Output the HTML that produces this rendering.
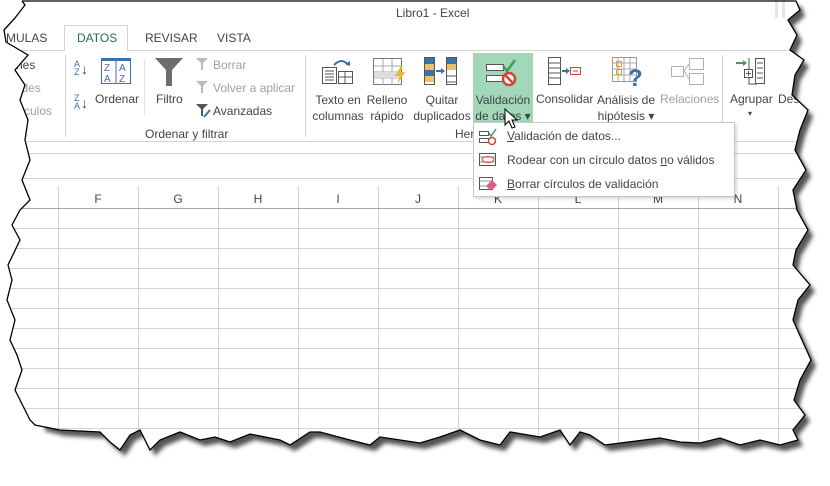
<!DOCTYPE html>
<html><head><meta charset="utf-8"><style>
*{margin:0;padding:0;box-sizing:border-box}
body{width:830px;height:485px;background:#fff;position:relative;overflow:hidden;font-family:"Liberation Sans",sans-serif;color:#444}
#page{position:absolute;left:0;top:0;width:830px;height:485px;background:#fff;
clip-path:polygon(22px 0,796px 0,800px 10px,788px 20px,797px 35px,790px 50px,804px 60px,795px 75px,792px 95px,808px 110px,800px 130px,795px 150px,806px 170px,793px 190px,797px 210px,808px 230px,796px 250px,793px 265px,810px 285px,798px 300px,793px 320px,802px 340px,811px 360px,800px 380px,794px 400px,805px 415px,793px 430px,798px 440px,780px 445px,760px 440px,740px 445px,720px 438px,700px 443px,680px 442px,660px 438px,605px 445px,590px 435px,580px 432px,570px 445px,560px 430px,540px 437px,510px 432px,500px 445px,480px 440px,460px 430px,440px 437px,420px 443px,380px 437px,370px 445px,350px 440px,320px 432px,310px 432px,290px 445px,280px 440px,250px 434px,230px 442px,215px 437px,200px 440px,180px 432px,160px 440px,150px 450px,140px 430px,130px 435px,120px 450px,110px 442px,100px 432px,60px 430px,35px 425px,30px 420px,20px 400px,15px 390px,22px 370px,17px 355px,10px 340px,15px 320px,7px 300px,12px 280px,8px 265px,20px 240px,12px 225px,20px 210px,30px 200px,22px 180px,30px 160px,25px 140px,28px 120px,20px 100px,25px 85px,15px 70px,28px 55px,6px 42px,4px 30px,15px 18px,25px 5px)}
.a{position:absolute;white-space:nowrap;font-size:12px;line-height:14px}
.g{color:#a0a0a0}
.c{text-align:center}
.hl{position:absolute;background:#d5d5d5}
</style></head><body>
<svg style="position:absolute;left:0;top:0" width="830" height="485">
<defs><filter id="b"><feGaussianBlur stdDeviation="2"/></filter></defs>
<polygon filter="url(#b)" fill="#555" transform="translate(5,6)" points="796,0 800,10 788,20 797,35 790,50 804,60 795,75 792,95 808,110 800,130 795,150 806,170 793,190 797,210 808,230 796,250 793,265 810,285 798,300 793,320 802,340 811,360 800,380 794,400 805,415 793,430 798,440 780,445 760,440 740,445 720,438 700,443 680,442 660,438 605,445 590,435 580,432 570,445 560,430 540,437 510,432 500,445 480,440 460,430 440,437 420,443 380,437 370,445 350,440 320,432 310,432 290,445 280,440 250,434 230,442 215,437 200,440 180,432 160,440 150,450 140,430 130,435 120,450 110,442 100,432 60,430 40,425 40,0"/>
</svg>
<div id="page">
<div class="a" style="left:396px;top:6px">Libro1 - Excel</div>
<div style="position:absolute;left:775px;top:0;width:10px;height:18px;border-left:3px solid #e6e6e6;border-right:3px solid #e6e6e6"></div>
<div class="a" style="left:6px;top:31px">MULAS</div>
<div style="position:absolute;left:64px;top:25px;width:64px;height:26px;border:1px solid #d4d4d4;border-bottom:none;background:#fff;z-index:2"></div>
<div class="hl" style="left:0;top:50px;width:830px;height:1px"></div>
<div class="a" style="left:77px;top:31px;color:#217346;z-index:3">DATOS</div>
<div class="a" style="left:145px;top:31px">REVISAR</div>
<div class="a" style="left:217px;top:31px">VISTA</div>
<div class="a" style="left:16px;top:58px">nes</div>
<div class="a g" style="left:8px;top:81px">dades</div>
<div class="a g" style="left:14px;top:104px">ínculos</div>
<div class="hl" style="left:65px;top:55px;width:1px;height:82px"></div>
<div class="a" style="left:74px;top:60px;font-size:9px;line-height:8px;color:#3a6fb0">A<br>Z</div><div class="a" style="left:81px;top:62px;font-size:14px">↓</div>
<div class="a" style="left:74px;top:94px;font-size:9px;line-height:8px;color:#3a6fb0">Z<br>A</div><div class="a" style="left:81px;top:96px;font-size:14px">↓</div>
<svg style="position:absolute;left:101px;top:58px" width="30" height="26"><rect x="0.5" y="2.5" width="29" height="23" fill="#fff" stroke="#3a6fb0"/><rect x="0" y="0" width="30" height="3" fill="#3a6fb0"/><line x1="15" y1="3" x2="15" y2="26" stroke="#3a6fb0"/><text x="3" y="13" font-size="10" fill="#6a5aa8" font-family="Liberation Sans">Z</text><text x="3" y="24" font-size="10" fill="#3a6fb0" font-family="Liberation Sans">A</text><text x="18" y="13" font-size="10" fill="#3a6fb0" font-family="Liberation Sans">A</text><text x="18" y="24" font-size="10" fill="#6a5aa8" font-family="Liberation Sans">Z</text></svg>
<div class="a" style="left:95px;top:92px">Ordenar</div>
<div class="hl" style="left:144px;top:60px;width:1px;height:55px;background:#e3e3e3"></div>
<svg style="position:absolute;left:154px;top:57px" width="30" height="30"><path d="M1 1H29L18 13V29H12V13Z" fill="#6d6d6d"/></svg>
<div class="a" style="left:156px;top:92px">Filtro</div>
<svg style="position:absolute;left:195px;top:57px" width="16" height="64"><path d="M1 1H13L8 6V13H6V6Z" fill="#bbb"/><path d="M1 24H13L8 29V36H6V29Z" fill="#bbb"/><path d="M1 47H13L8 52V59H6V52Z" fill="#555"/><path d="M9 60L15 53" stroke="#3a6fb0" stroke-width="2"/></svg>
<div class="a g" style="left:213px;top:58px">Borrar</div>
<div class="a g" style="left:213px;top:81px">Volver a aplicar</div>
<div class="a" style="left:213px;top:104px">Avanzadas</div>
<div class="a" style="left:145px;top:127px">Ordenar y filtrar</div>
<div class="hl" style="left:305px;top:55px;width:1px;height:82px"></div>
<svg style="position:absolute;left:320px;top:57px" width="36" height="28"><path d="M14 8 Q22 0 28 8" stroke="#3a6fb0" stroke-width="2" fill="none"/><path d="M25 7L30 9L30 4Z" fill="#3a6fb0"/><rect x="2.5" y="10.5" width="14" height="16" fill="#fff" stroke="#555"/><path d="M5 14H14M5 17H14M5 20H14M5 23H14" stroke="#555"/><rect x="18.5" y="14.5" width="14" height="12" fill="#fff" stroke="#555"/><path d="M19 20H32M25 15V26" stroke="#555"/></svg>
<div class="a c" style="left:310px;top:92px;width:56px;line-height:16px">Texto en<br>columnas</div>
<svg style="position:absolute;left:373px;top:58px" width="34" height="28"><rect x="0.5" y="0.5" width="28" height="26" fill="#fff" stroke="#777"/><path d="M1 8H28M1 14H28M1 20H28M10 1V27M19 1V27" stroke="#aaa"/><rect x="1" y="14" width="27" height="6" fill="#ddd"/><path d="M28 8L22 18H27L24 27L32 14H27L30 8Z" fill="#f0b429"/></svg>
<div class="a c" style="left:365px;top:92px;width:44px;line-height:16px">Relleno<br>rápido</div>
<svg style="position:absolute;left:424px;top:57px" width="34" height="28"><rect x="0.5" y="0.5" width="10" height="27" fill="#fff" stroke="#555"/><rect x="1" y="1" width="9" height="6" fill="#3a6fb0"/><rect x="1" y="7" width="9" height="6" fill="#e8c070"/><rect x="1" y="13" width="9" height="6" fill="#3a6fb0"/><rect x="1" y="19" width="9" height="6" fill="#e8c070"/><path d="M12 14H18" stroke="#3a6fb0" stroke-width="2"/><path d="M17 11L21 14L17 17Z" fill="#3a6fb0"/><rect x="22.5" y="0.5" width="10" height="27" fill="#fff" stroke="#555"/><rect x="23" y="1" width="9" height="6" fill="#3a6fb0"/><rect x="23" y="7" width="9" height="6" fill="#e8c070"/><path d="M23 19H32M23 25H32" stroke="#555"/></svg>
<div class="a c" style="left:410px;top:92px;width:64px;line-height:16px">Quitar<br>duplicados</div>
<div style="position:absolute;left:473px;top:53px;width:60px;height:70px;background:#a2d7b9"></div>
<svg style="position:absolute;left:486px;top:58px" width="34" height="30"><rect x="0.5" y="6.5" width="17" height="6" fill="#fff" stroke="#555"/><rect x="0.5" y="17.5" width="17" height="6" fill="#fff" stroke="#555"/><path d="M17 8L21 13L29 2" stroke="#3f9a5f" stroke-width="2.5" fill="none"/><circle cx="23" cy="21" r="6" fill="#fff" stroke="#d04437" stroke-width="2.5"/><path d="M19 17L27 25" stroke="#d04437" stroke-width="2.5"/></svg>
<div class="a c" style="left:470px;top:92px;width:66px;line-height:16px">Validación<br>de datos ▾</div>
<svg style="position:absolute;left:548px;top:57px" width="34" height="28"><rect x="0.5" y="0.5" width="12" height="27" fill="#fff" stroke="#555"/><path d="M1 6H12M1 11H12M1 16H12M1 21H12" stroke="#555"/><path d="M14 14H19" stroke="#3a6fb0" stroke-width="2"/><path d="M18 11L22 14L18 17Z" fill="#3a6fb0"/><rect x="22.5" y="10.5" width="10" height="7" fill="#fff" stroke="#d04437"/><path d="M25 14H30" stroke="#d04437"/></svg>
<div class="a" style="left:536px;top:92px">Consolidar</div>
<svg style="position:absolute;left:612px;top:57px" width="34" height="30"><rect x="0.5" y="0.5" width="24" height="24" fill="#fff" stroke="#999"/><path d="M1 6H24M1 12H24M1 18H24M6 1V24M12 1V24M18 1V24" stroke="#aaa"/><rect x="4.5" y="4.5" width="5" height="5" fill="none" stroke="#e0a030"/><rect x="4.5" y="12.5" width="5" height="5" fill="none" stroke="#e0a030"/><text x="16" y="29" font-size="24" font-weight="bold" fill="#3a6fb0" font-family="Liberation Sans">?</text></svg>
<div class="a c" style="left:595px;top:92px;width:62px;line-height:16px">Análisis de<br>hipótesis ▾</div>
<svg style="position:absolute;left:671px;top:58px" width="34" height="28" opacity="0.45"><rect x="0.5" y="8.5" width="12" height="10" fill="#fff" stroke="#555"/><rect x="18.5" y="0.5" width="14" height="11" fill="#fff" stroke="#555"/><rect x="18.5" y="15.5" width="14" height="11" fill="#fff" stroke="#555"/><path d="M13 13L18 6M13 13L18 21" stroke="#555"/></svg>
<div class="a g" style="left:660px;top:92px">Relaciones</div>
<div class="hl" style="left:722px;top:55px;width:1px;height:82px"></div>
<svg style="position:absolute;left:735px;top:57px" width="34" height="30"><path d="M1 6H9" stroke="#3f9a5f" stroke-width="2"/><path d="M8 3L12 6L8 9Z" fill="#3f9a5f"/><path d="M14 1V27H22" stroke="#555" fill="none"/><rect x="20.5" y="1.5" width="9" height="25" fill="#fff" stroke="#555"/><path d="M22 6H28M22 11H28M22 16H28M22 21H28" stroke="#555"/><rect x="9.5" y="12.5" width="8" height="8" fill="#fff" stroke="#555"/><path d="M11 16.5H16M13.5 14V19" stroke="#555"/></svg>
<div class="a" style="left:730px;top:92px">Agrupar</div>
<div class="a" style="left:748px;top:107px;font-size:8px">▾</div>
<div class="a" style="left:778px;top:92px">Des</div>
<div class="a" style="left:455px;top:127px">Her</div>
<div class="hl" style="left:0;top:141px;width:830px;height:1px"></div>
<div class="hl" style="left:0;top:153px;width:830px;height:1px"></div>
<div class="hl" style="left:0;top:178px;width:830px;height:1px"></div>
<svg style="position:absolute;left:0;top:186px" width="830" height="300">
<g stroke="#d4d4d4"><path d="M58.5 0V300M138.5 0V300M218.5 0V300M298.5 0V300M378.5 0V300M458.5 0V300M538.5 0V300M618.5 0V300M698.5 0V300M778.5 0V300"/>
<path d="M0 42.5H830M0 62.5H830M0 82.5H830M0 102.5H830M0 122.5H830M0 142.5H830M0 162.5H830M0 182.5H830M0 202.5H830M0 222.5H830M0 242.5H830"/></g>
<path d="M0 22.5H830" stroke="#a8a8a8"/>
</svg>
<div class="a c" style="left:58px;top:192px;width:80px">F</div>
<div class="a c" style="left:138px;top:192px;width:80px">G</div>
<div class="a c" style="left:218px;top:192px;width:80px">H</div>
<div class="a c" style="left:298px;top:192px;width:80px">I</div>
<div class="a c" style="left:378px;top:192px;width:80px">J</div>
<div class="a c" style="left:458px;top:192px;width:80px">K</div>
<div class="a c" style="left:538px;top:192px;width:80px">L</div>
<div class="a c" style="left:618px;top:192px;width:80px">M</div>
<div class="a c" style="left:698px;top:192px;width:80px">N</div>
<div style="position:absolute;left:473px;top:122px;width:262px;height:75px;background:#fff;border:1px solid #c6c6c6;box-shadow:2px 2px 3px rgba(0,0,0,.15)"></div>
<svg style="position:absolute;left:479px;top:128px" width="20" height="64"><rect x="0.5" y="3.5" width="9" height="4" fill="#fff" stroke="#555"/><rect x="0.5" y="10.5" width="9" height="4" fill="#fff" stroke="#555"/><path d="M10 5L12 8L17 1" stroke="#3f9a5f" stroke-width="1.5" fill="none"/><circle cx="13" cy="13" r="3.5" fill="#fff" stroke="#d04437" stroke-width="1.5"/>
<rect x="0.5" y="25.5" width="16" height="12" fill="#fff" stroke="#555"/><path d="M1 29H16M1 34H16" stroke="#999"/><ellipse cx="9" cy="31.5" rx="6" ry="3" fill="none" stroke="#d04437"/>
<rect x="0.5" y="49.5" width="13" height="12" fill="#fff" stroke="#555"/><path d="M1 53H13M1 58H13" stroke="#999"/><path d="M7 58L13 52L18 57L12 63Z" fill="#e05a8a"/></svg>
<div class="a" style="left:507px;top:129px"><u>V</u>alidación de datos...</div>
<div class="a" style="left:507px;top:153px">Rodear con un círculo datos <u>n</u>o válidos</div>
<div class="a" style="left:507px;top:177px"><u>B</u>orrar círculos de validación</div>
<svg style="position:absolute;left:504px;top:108px" width="16" height="22"><path d="M1 1V17L5 13L8 20L11 19L8 12H13Z" fill="#fff" stroke="#000"/></svg>
</div>
<svg style="position:absolute;left:0;top:0" width="830" height="485"><polyline fill="none" stroke="#000" stroke-width="1.3" points="22,1 796,1 800,10 788,20 797,35 790,50 804,60 795,75 792,95 808,110 800,130 795,150 806,170 793,190 797,210 808,230 796,250 793,265 810,285 798,300 793,320 802,340 811,360 800,380 794,400 805,415 793,430 798,440 780,445 760,440 740,445 720,438 700,443 680,442 660,438 605,445 590,435 580,432 570,445 560,430 540,437 510,432 500,445 480,440 460,430 440,437 420,443 380,437 370,445 350,440 320,432 310,432 290,445 280,440 250,434 230,442 215,437 200,440 180,432 160,440 150,450 140,430 130,435 120,450 110,442 100,432 60,430 35,425 30,420 20,400 15,390 22,370 17,355 10,340 15,320 7,300 12,280 8,265 20,240 12,225 20,210 30,200 22,180 30,160 25,140 28,120 20,100 25,85 15,70 28,55 6,42 4,30 15,18 25,5 22,1"/></svg>
</body></html>
